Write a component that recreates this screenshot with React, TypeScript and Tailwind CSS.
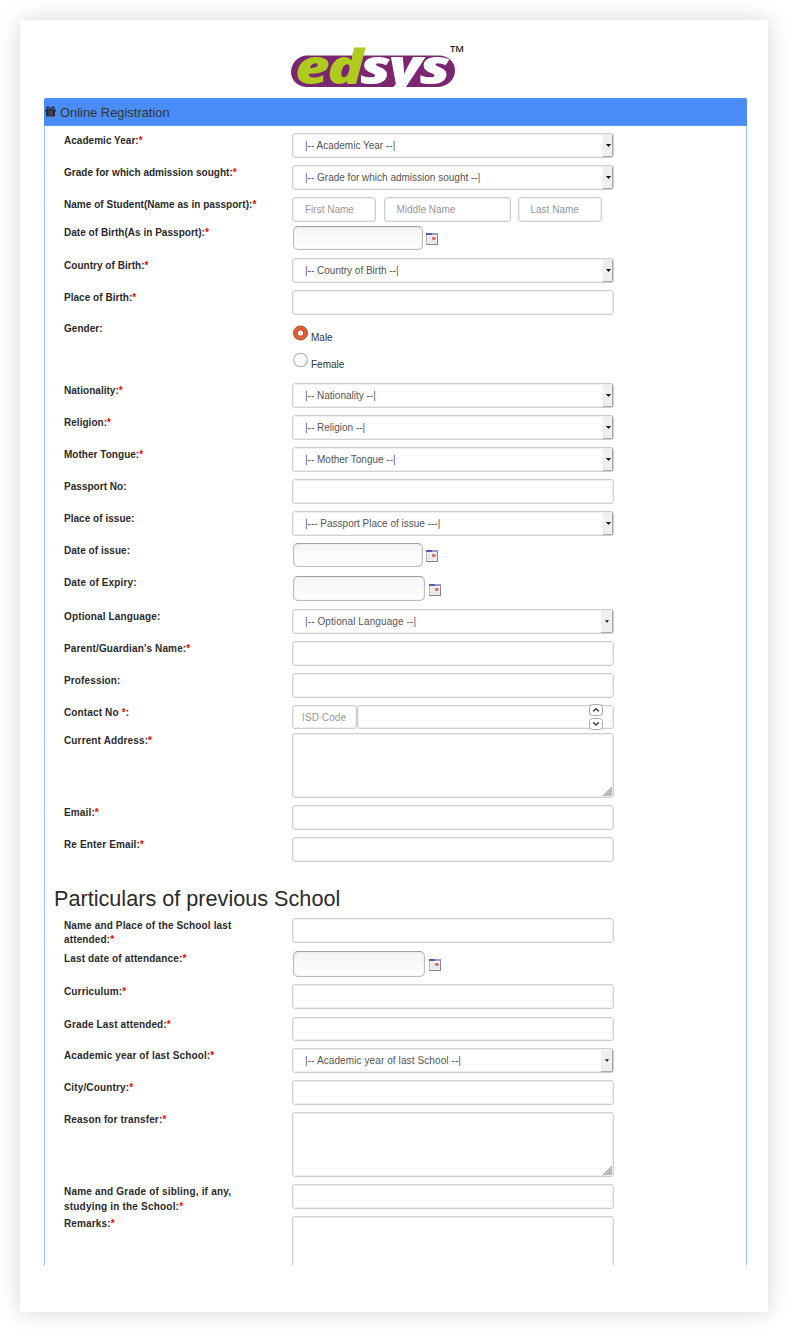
import React from "react";
import { clsx } from "clsx";

const box =
  "block rounded-[3px] border border-[#cfcfcf] bg-white shadow-[inset_0_0_0_1px_#f0f0f0] text-[10px] text-[#555] outline-none resize-none";

function Row({
  label,
  height,
  labelClass = "pt-px",
  fieldClass = "pt-0",
  required = true,
  wide = false,
  children,
}: {
  label: React.ReactNode;
  height: string;
  labelClass?: string;
  fieldClass?: string;
  required?: boolean;
  wide?: boolean;
  children: React.ReactNode;
}) {
  return (
    <div className={clsx("flex shrink-0 items-start", height)}>
      <label
        className={clsx(
          "block w-[228px] shrink-0 pr-8 text-[10px] leading-[14px] font-bold whitespace-nowrap text-[#2b2b2b]",
          wide ? "tracking-[0.14px]" : "tracking-[0.03px]",
          labelClass,
        )}
      >
        {label}
        {required && <span className="text-[#f00]">*</span>}
      </label>
      <div className={fieldClass}>{children}</div>
    </div>
  );
}

function Text({ height = "h-[25px]" }: { height?: string }) {
  return <input type="text" className={clsx(box, "w-[322px] px-3", height)} />;
}

function Select({ value, height = "h-[25px]", late = false }: { value: string; height?: string; late?: boolean }) {
  return (
    <div className={clsx(box, "flex! w-[322px] overflow-hidden", height)}>
      <select
        className={clsx(
          "min-w-0 flex-1 appearance-none bg-transparent pl-3 text-[10px] text-[#555] outline-none",
          late && "tracking-[0.1px]",
        )}
      >
        <option>{value}</option>
      </select>
      <span
        className={clsx(
          "flex items-center justify-center border-r border-b border-[#a9a7a5] bg-[#f0efee]",
          late ? "w-3" : "w-2.5 pl-px",
        )}
      >
        <svg width={late ? 4 : 5} height="3" viewBox="0 0 5 3">
          <path d="M0 0h5L2.5 3z" fill="#111" />
        </svg>
      </span>
    </div>
  );
}

function CalendarIcon() {
  return (
    <svg width="12" height="12" viewBox="0 0 12 12">
      <rect x="0.5" y="0.5" width="11" height="11" fill="#f1eff1" stroke="#b5b1b5" />
      <path d="M11.5 1v10.5H0.5" fill="none" stroke="#858585" />
      <rect x="0" y="0" width="6" height="2" fill="#5a5ab0" />
      <rect x="6" y="0" width="6" height="2" fill="#9a9ac4" />
      <path d="M1 5.5h10M1 8.5h10M3.5 3v8M6.500 3v8" stroke="#dedce2" strokeWidth="0.6" />
      <rect x="6" y="4" width="3.600" height="3" rx="1" fill="#d4706a" />
    </svg>
  );
}

function DateField({ size = "h-6 w-[130px]", gap = "gap-[3px]" }: { size?: string; gap?: string }) {
  return (
    <div className={clsx("flex items-center pl-px", gap)}>
      <input
        type="text"
        className={clsx(
          "block rounded-[5px] border border-[#bcbcbc] border-t-[#a2a2a2] bg-linear-to-b from-[#f5f5f5] to-white shadow-[inset_0_0_1px_#aaa] outline-none",
          size,
        )}
      />
      <span className="pt-0.5">
        <CalendarIcon />
      </span>
    </div>
  );
}

function TextArea() {
  return (
    <div className={clsx(box, "flex! h-[65px] w-[322px] items-end")}>
      <textarea className="h-full min-w-0 flex-1 resize-none outline-none" />
      <svg width="11" height="11" viewBox="0 0 11 11">
        <path d="M10 1v9H0z" fill="#c4c4c4" />
        <path d="M10 1L0.5 10.5M10 4.5L4.5 10M10 7.5L7.5 10" stroke="#9a9a9a" strokeWidth="0.8" />
      </svg>
    </div>
  );
}

function Radio({ checked, label }: { checked?: boolean; label: string }) {
  return (
    <div className="flex h-[27px] items-start gap-[3px] pl-px">
      <svg width="15" height="16" viewBox="0 0 15 16">
        {checked ? (
          <>
            <circle cx="7.5" cy="8" r="7" fill="#dd6032" stroke="#b34a24" strokeWidth="1" />
            <circle cx="7.5" cy="8" r="3.6" fill="#c9502a" />
            <circle cx="7.5" cy="8" r="2.6" fill="#fff" />
          </>
        ) : (
          <circle cx="7.5" cy="8" r="6.8" fill="#fff" stroke="#b0b0b0" strokeWidth="1.1" />
        )}
      </svg>
      <span className="pt-1.5 text-[10px] leading-[14px] text-[#333]">{label}</span>
    </div>
  );
}

function Spin({ up }: { up?: boolean }) {
  return (
    <span className="flex h-3 w-3.5 items-center justify-center rounded-[3.5px] border border-[#a8a8a8] bg-white">
      <svg width="8" height="6" viewBox="0 0 8 6">
        <path d={up ? "M1.2 4.4L4 1.8l2.8 2.6" : "M1.2 1.4L4 4l2.8-2.6"} fill="none" stroke="#444" strokeWidth="1.5" />
      </svg>
    </span>
  );
}

function GiftIcon() {
  return (
    <svg width="11" height="11" viewBox="0 0 11 11">
      <path d="M0.300 3.600h10.400v2.600h-0.700v4.300h-9v-4.300h-0.700z" fill="#2b2f38" />
      <path d="M5.500 3.600C4.600 1.800 3.900 1 3 1 1.600 1 1.400 3.400 3 3.600zM5.500 3.600C6.400 1.800 7.100 1 8 1c1.400 0 1.600 2.400 0 2.600z" fill="none" stroke="#2b2f38" strokeWidth="1.300" />
      <path d="M4.400 4.600v5M6.600 4.600v5" stroke="#4b8df8" strokeWidth="0.500" />
    </svg>
  );
}

function Logo() {
  return (
    <svg width="180" height="54" viewBox="0 0 180 54" className="block overflow-visible">
      <path
        d="M19 11.500H151C160 11.500 167 18 167 26.500S160 43 149 43H19C10 43 3 36.500 3 28S10 11.500 19 11.500z"
        fill="#7a2670"
      />
      <g fontFamily="'Open Sans', 'Noto Sans', sans-serif" fontWeight="800" fontStyle="italic" fontSize="48">
        <text x="7" y="39.500" textLength="66" lengthAdjust="spacingAndGlyphs" letterSpacing="-2" fill="#b0cb1f">
          ed
        </text>
        <text x="72" y="39.500" textLength="88" lengthAdjust="spacingAndGlyphs" letterSpacing="-2" fill="#fff">
          sys
        </text>
      </g>
      <rect x="60" y="43" width="80" height="11" fill="#fff" />
      <text
        x="162"
        y="8"
        fontFamily="'Open Sans', sans-serif"
        fontWeight="600"
        fontSize="8.500"
        textLength="14"
        lengthAdjust="spacingAndGlyphs"
        fill="#222"
      >
        TM
      </text>
    </svg>
  );
}

export default function App() {
  return (
    <div className="h-[1332px] w-[788px] bg-white p-5 font-['Liberation_Sans',Arial,sans-serif]">
      <main className="flex h-[1292px] w-[748px] flex-col bg-white pt-6 pl-6 shadow-[0_0_20px_rgba(0,0,0,0.17)]">
        <div className="h-[54px] shrink-0 pl-[244px]">
          <Logo />
        </div>
        <section className="flex h-[1167px] w-[703px] flex-col overflow-hidden">
          <header className="flex h-7 shrink-0 items-center gap-1 rounded-t-[2px] border-b border-[#5f9bf9] bg-[#4b8df8] pl-px">
            <GiftIcon />
            <h1 className="pt-0.5 text-[12.9px] leading-5 text-[#333]">Online Registration</h1>
          </header>
          <form className="flex min-h-0 flex-1 flex-col border-x-[1.5px] border-[#9fc3fc] pt-[7px] pl-[19px]">
            <Row label="Academic Year:" height="h-8">
              <Select value="|-- Academic Year --|" />
            </Row>
            <Row label="Grade for which admission sought:" height="h-8">
              <Select value="|-- Grade for which admission sought --|" />
            </Row>
            <Row label="Name of Student(Name as in passport):" height="h-7">
              <div className="flex">
                <input placeholder="First Name" className={clsx(box, "h-[25px] w-[84px] pl-3 placeholder:text-[#999]")} />
                <input placeholder="Middle Name" className={clsx(box, "ml-2 h-[25px] w-[127px] pl-[11.5px] placeholder:text-[#999]")} />
                <input placeholder="Last Name" className={clsx(box, "ml-[7px] h-[25px] w-[84px] pl-[11.5px] placeholder:text-[#999]")} />
              </div>
            </Row>
            <Row label="Date of Birth(As in Passport):" height="h-[33px]" fieldClass="pt-px">
              <DateField />
            </Row>
            <Row label="Country of Birth:" height="h-8">
              <Select value="|-- Country of Birth --|" />
            </Row>
            <Row label="Place of Birth:" height="h-[31px]">
              <Text />
            </Row>
            <Row label="Gender:" height="h-[62px]" fieldClass="pt-1" required={false}>
              <Radio checked label="Male" />
              <Radio label="Female" />
            </Row>
            <Row label="Nationality:" height="h-8">
              <Select value="|-- Nationality --|" />
            </Row>
            <Row label="Religion:" height="h-8">
              <Select value="|-- Religion --|" />
            </Row>
            <Row label="Mother Tongue:" height="h-8">
              <Select value="|-- Mother Tongue --|" />
            </Row>
            <Row label="Passport No:" height="h-8" required={false}>
              <Text />
            </Row>
            <Row label="Place of issue:" height="h-8" required={false}>
              <Select value="|--- Passport Place of issue ---|" />
            </Row>
            <Row label="Date of issue:" height="h-8" required={false}>
              <DateField />
            </Row>
            <Row label="Date of Expiry:" height="h-[34px]" fieldClass="pt-px" required={false} wide>
              <DateField size="h-[25px] w-[132px]" gap="gap-1" />
            </Row>
            <Row label="Optional Language:" height="h-8" required={false} wide>
              <Select value="|-- Optional Language --|" late />
            </Row>
            <Row label="Parent/Guardian's Name:" height="h-8" wide>
              <Text />
            </Row>
            <Row label="Profession:" height="h-8" required={false} wide>
              <Text />
            </Row>
            <Row
              label={
                <>
                  Contact No <span className="text-[#f00]">*</span>:
                </>
              }
              height="h-7"
              required={false}
              wide
            >
              <div className="relative flex">
                <input placeholder="ISD Code" className={clsx(box, "h-6 w-[65px] pl-[9px] tracking-[0.1px] placeholder:text-[#999]")} />
                <input className={clsx(box, "h-6 w-[257px]")} />
                <span className="absolute top-[-1px] right-[11px] flex flex-col gap-0.5">
                  <Spin up />
                  <Spin />
                </span>
              </div>
            </Row>
            <Row label="Current Address:" height="h-[72px]" wide>
              <TextArea />
            </Row>
            <Row label="Email:" height="h-8" wide>
              <Text />
            </Row>
            <Row label="Re Enter Email:" height="h-[46px]" wide>
              <Text />
            </Row>
            <h2 className="-ml-2.5 h-[35px] shrink-0 pt-px text-[21.650px] leading-[30px] text-[#2b2b2b]">
              Particulars of previous School
            </h2>
            <Row
              label={
                <>
                  Name and Place of the School last
                  <br />
                  attended:
                </>
              }
              height="h-[33px]"
              wide
            >
              <Text />
            </Row>
            <Row label="Last date of attendance:" height="h-[33px]" wide>
              <DateField size="h-[26px] w-[132px]" gap="gap-1" />
            </Row>
            <Row label="Curriculum:" height="h-[33px]" wide>
              <Text />
            </Row>
            <Row label="Grade Last attended:" height="h-[31px]" wide>
              <Text height="h-6" />
            </Row>
            <Row label="Academic year of last School:" height="h-8" wide>
              <Select value="|-- Academic year of last School --|" late />
            </Row>
            <Row label="City/Country:" height="h-8" wide>
              <Text />
            </Row>
            <Row label="Reason for transfer:" height="h-[72px]" wide>
              <TextArea />
            </Row>
            <Row
              label={
                <>
                  Name and Grade of sibling, if any,
                  <br />
                  studying in the School:
                </>
              }
              height="h-8"
              labelClass="leading-[15px]! tracking-[0.2px]!"
              wide
            >
              <Text />
            </Row>
            <Row label="Remarks:" height="h-[49px]" wide>
              <textarea className={clsx(box, "h-[65px] w-[322px]")} />
            </Row>
          </form>
        </section>
      </main>
    </div>
  );
}
